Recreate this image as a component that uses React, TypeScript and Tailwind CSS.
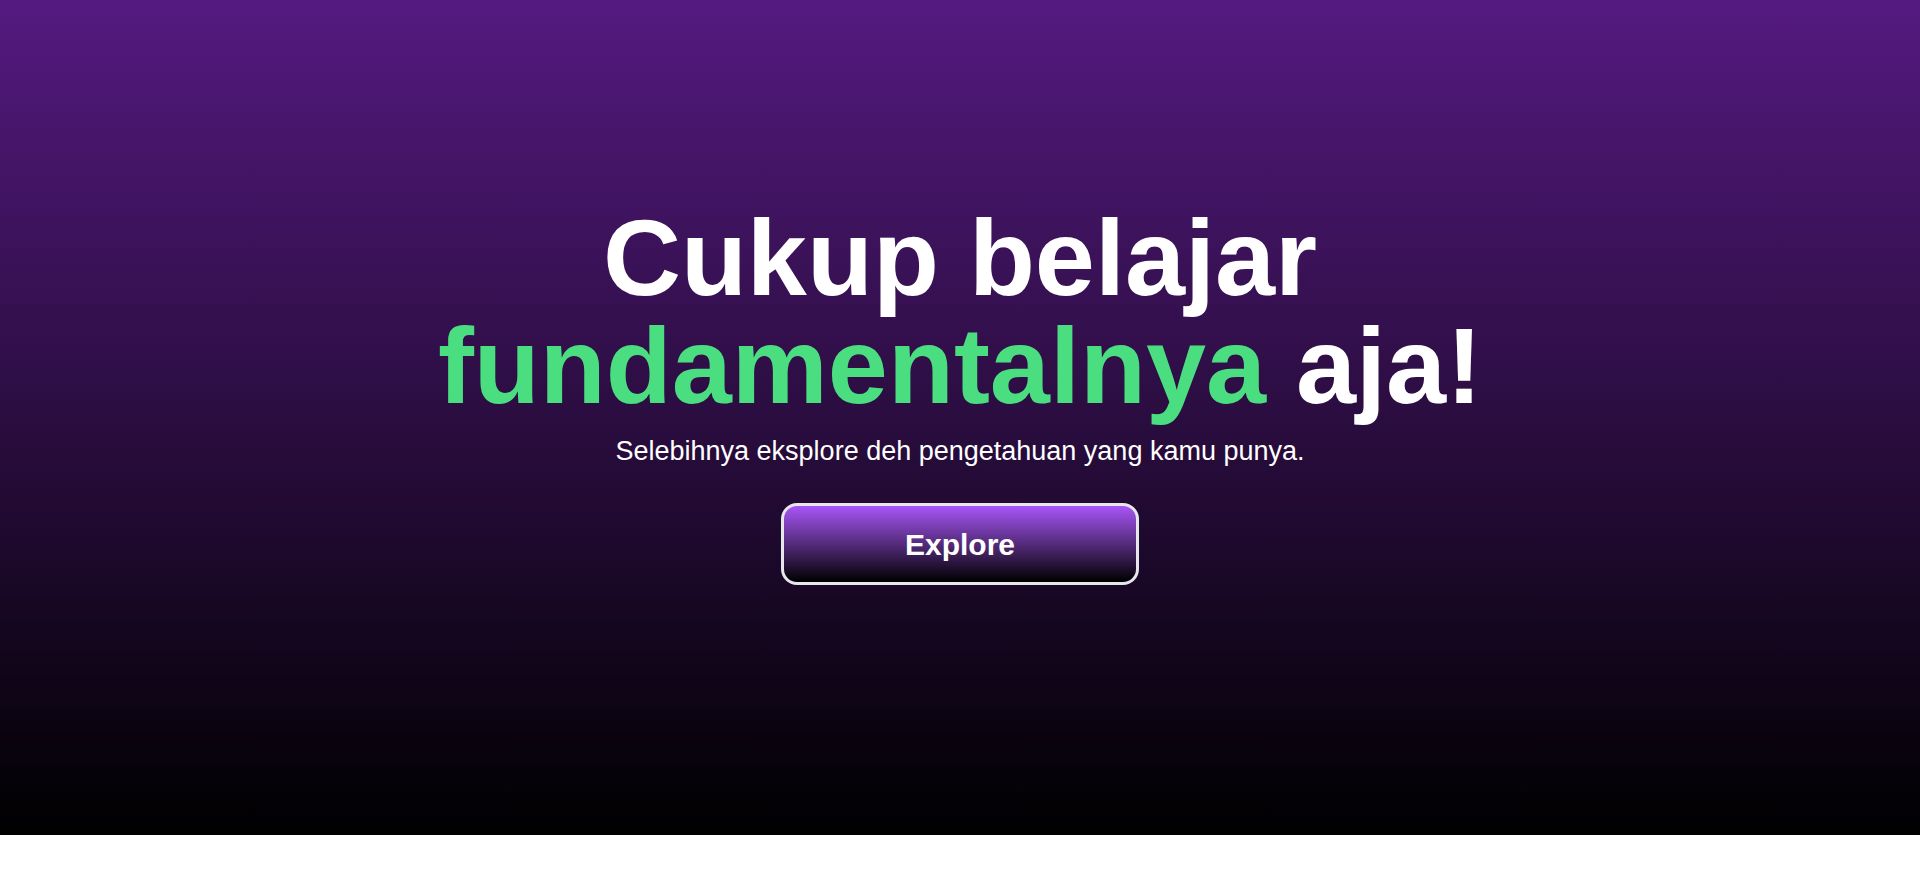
import React from "react";

export default function App() {
  return (
    <div className="w-full bg-white" style={{ fontFamily: '"Liberation Sans", Arial, sans-serif' }}>
      <section className="h-[835px] w-full bg-[linear-gradient(to_bottom,#551a80,#000000)] flex flex-col items-center pt-[204px]">
        <h1 className="text-[108px] leading-none font-bold text-white text-center">
          Cukup belajar
          <br />
          <span className="text-[#4ade80]">fundamentalnya</span> aja!
        </h1>
        <p className="mt-[13px] text-[27px] leading-9 text-white text-center">
          Selebihnya eksplore deh pengetahuan yang kamu punya.
        </p>
        <button className="mt-[34px] w-[358px] h-[82px] border-[3px] border-[#e5e7eb] rounded-2xl bg-[linear-gradient(to_bottom,#a855f7,#000000)] text-3xl font-bold text-white flex items-center justify-center pt-[2px]">
          Explore
        </button>
      </section>
      <div className="h-[5450px] w-full bg-white" />
    </div>
  );
}
